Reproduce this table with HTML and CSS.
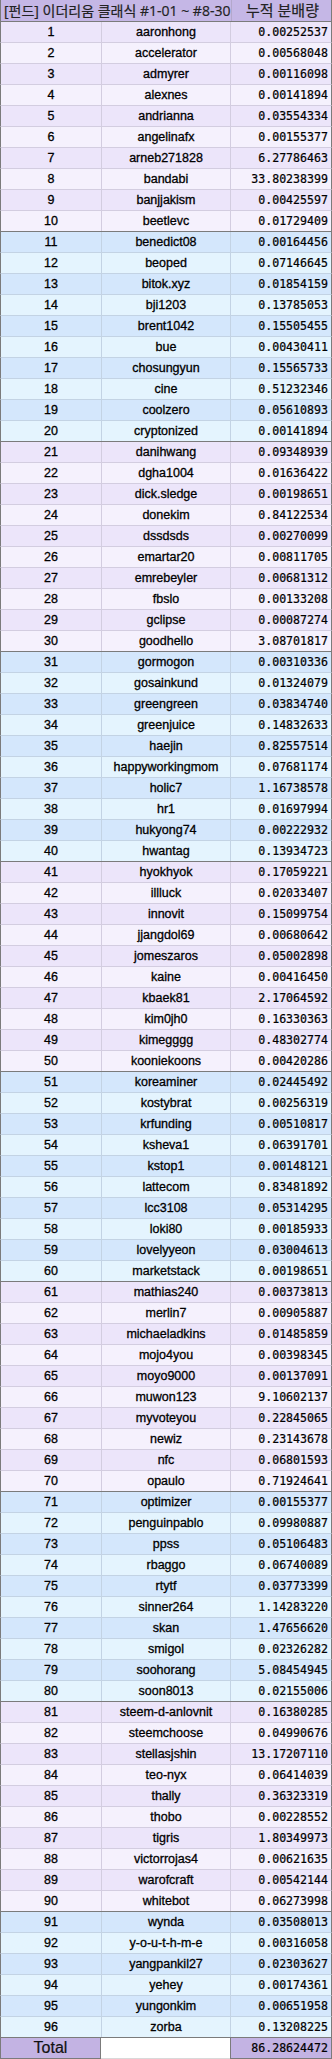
FILE: index.html
```html
<!DOCTYPE html>
<html lang="ko">
<head>
<meta charset="utf-8">
<link rel="stylesheet" href="styles.css">
</head>
<body>
<div class="sheet">
  <div class="hdr">
    <div class="hc title">[펀드] 이더리움 클래식 #1-01 ~ #8-30</div>
    <div class="hc amt">누적 분배량</div>
  </div>
  <div class="r p d"><div class="c n">1</div><div class="c u">aaronhong</div><div class="c v">0.00252537</div></div>
  <div class="r p"><div class="c n">2</div><div class="c u">accelerator</div><div class="c v">0.00568048</div></div>
  <div class="r p d"><div class="c n">3</div><div class="c u">admyrer</div><div class="c v">0.00116098</div></div>
  <div class="r p"><div class="c n">4</div><div class="c u">alexnes</div><div class="c v">0.00141894</div></div>
  <div class="r p d"><div class="c n">5</div><div class="c u">andrianna</div><div class="c v">0.03554334</div></div>
  <div class="r p"><div class="c n">6</div><div class="c u">angelinafx</div><div class="c v">0.00155377</div></div>
  <div class="r p d"><div class="c n">7</div><div class="c u">arneb271828</div><div class="c v">6.27786463</div></div>
  <div class="r p"><div class="c n">8</div><div class="c u">bandabi</div><div class="c v">33.80238399</div></div>
  <div class="r p d"><div class="c n">9</div><div class="c u">banjjakism</div><div class="c v">0.00425597</div></div>
  <div class="r p end"><div class="c n">10</div><div class="c u">beetlevc</div><div class="c v">0.01729409</div></div>
  <div class="r b d"><div class="c n">11</div><div class="c u">benedict08</div><div class="c v">0.00164456</div></div>
  <div class="r b"><div class="c n">12</div><div class="c u">beoped</div><div class="c v">0.07146645</div></div>
  <div class="r b d"><div class="c n">13</div><div class="c u">bitok.xyz</div><div class="c v">0.01854159</div></div>
  <div class="r b"><div class="c n">14</div><div class="c u">bji1203</div><div class="c v">0.13785053</div></div>
  <div class="r b d"><div class="c n">15</div><div class="c u">brent1042</div><div class="c v">0.15505455</div></div>
  <div class="r b"><div class="c n">16</div><div class="c u">bue</div><div class="c v">0.00430411</div></div>
  <div class="r b d"><div class="c n">17</div><div class="c u">chosungyun</div><div class="c v">0.15565733</div></div>
  <div class="r b"><div class="c n">18</div><div class="c u">cine</div><div class="c v">0.51232346</div></div>
  <div class="r b d"><div class="c n">19</div><div class="c u">coolzero</div><div class="c v">0.05610893</div></div>
  <div class="r b end"><div class="c n">20</div><div class="c u">cryptonized</div><div class="c v">0.00141894</div></div>
  <div class="r p d"><div class="c n">21</div><div class="c u">danihwang</div><div class="c v">0.09348939</div></div>
  <div class="r p"><div class="c n">22</div><div class="c u">dgha1004</div><div class="c v">0.01636422</div></div>
  <div class="r p d"><div class="c n">23</div><div class="c u">dick.sledge</div><div class="c v">0.00198651</div></div>
  <div class="r p"><div class="c n">24</div><div class="c u">donekim</div><div class="c v">0.84122534</div></div>
  <div class="r p d"><div class="c n">25</div><div class="c u">dssdsds</div><div class="c v">0.00270099</div></div>
  <div class="r p"><div class="c n">26</div><div class="c u">emartar20</div><div class="c v">0.00811705</div></div>
  <div class="r p d"><div class="c n">27</div><div class="c u">emrebeyler</div><div class="c v">0.00681312</div></div>
  <div class="r p"><div class="c n">28</div><div class="c u">fbslo</div><div class="c v">0.00133208</div></div>
  <div class="r p d"><div class="c n">29</div><div class="c u">gclipse</div><div class="c v">0.00087274</div></div>
  <div class="r p end"><div class="c n">30</div><div class="c u">goodhello</div><div class="c v">3.08701817</div></div>
  <div class="r b d"><div class="c n">31</div><div class="c u">gormogon</div><div class="c v">0.00310336</div></div>
  <div class="r b"><div class="c n">32</div><div class="c u">gosainkund</div><div class="c v">0.01324079</div></div>
  <div class="r b d"><div class="c n">33</div><div class="c u">greengreen</div><div class="c v">0.03834740</div></div>
  <div class="r b"><div class="c n">34</div><div class="c u">greenjuice</div><div class="c v">0.14832633</div></div>
  <div class="r b d"><div class="c n">35</div><div class="c u">haejin</div><div class="c v">0.82557514</div></div>
  <div class="r b"><div class="c n">36</div><div class="c u">happyworkingmom</div><div class="c v">0.07681174</div></div>
  <div class="r b d"><div class="c n">37</div><div class="c u">holic7</div><div class="c v">1.16738578</div></div>
  <div class="r b"><div class="c n">38</div><div class="c u">hr1</div><div class="c v">0.01697994</div></div>
  <div class="r b d"><div class="c n">39</div><div class="c u">hukyong74</div><div class="c v">0.00222932</div></div>
  <div class="r b end"><div class="c n">40</div><div class="c u">hwantag</div><div class="c v">0.13934723</div></div>
  <div class="r p d"><div class="c n">41</div><div class="c u">hyokhyok</div><div class="c v">0.17059221</div></div>
  <div class="r p"><div class="c n">42</div><div class="c u">illluck</div><div class="c v">0.02033407</div></div>
  <div class="r p d"><div class="c n">43</div><div class="c u">innovit</div><div class="c v">0.15099754</div></div>
  <div class="r p"><div class="c n">44</div><div class="c u">jjangdol69</div><div class="c v">0.00680642</div></div>
  <div class="r p d"><div class="c n">45</div><div class="c u">jomeszaros</div><div class="c v">0.05002898</div></div>
  <div class="r p"><div class="c n">46</div><div class="c u">kaine</div><div class="c v">0.00416450</div></div>
  <div class="r p d"><div class="c n">47</div><div class="c u">kbaek81</div><div class="c v">2.17064592</div></div>
  <div class="r p"><div class="c n">48</div><div class="c u">kim0jh0</div><div class="c v">0.16330363</div></div>
  <div class="r p d"><div class="c n">49</div><div class="c u">kimegggg</div><div class="c v">0.48302774</div></div>
  <div class="r p end"><div class="c n">50</div><div class="c u">kooniekoons</div><div class="c v">0.00420286</div></div>
  <div class="r b d"><div class="c n">51</div><div class="c u">koreaminer</div><div class="c v">0.02445492</div></div>
  <div class="r b"><div class="c n">52</div><div class="c u">kostybrat</div><div class="c v">0.00256319</div></div>
  <div class="r b d"><div class="c n">53</div><div class="c u">krfunding</div><div class="c v">0.00510817</div></div>
  <div class="r b"><div class="c n">54</div><div class="c u">ksheva1</div><div class="c v">0.06391701</div></div>
  <div class="r b d"><div class="c n">55</div><div class="c u">kstop1</div><div class="c v">0.00148121</div></div>
  <div class="r b"><div class="c n">56</div><div class="c u">lattecom</div><div class="c v">0.83481892</div></div>
  <div class="r b d"><div class="c n">57</div><div class="c u">lcc3108</div><div class="c v">0.05314295</div></div>
  <div class="r b"><div class="c n">58</div><div class="c u">loki80</div><div class="c v">0.00185933</div></div>
  <div class="r b d"><div class="c n">59</div><div class="c u">lovelyyeon</div><div class="c v">0.03004613</div></div>
  <div class="r b end"><div class="c n">60</div><div class="c u">marketstack</div><div class="c v">0.00198651</div></div>
  <div class="r p d"><div class="c n">61</div><div class="c u">mathias240</div><div class="c v">0.00373813</div></div>
  <div class="r p"><div class="c n">62</div><div class="c u">merlin7</div><div class="c v">0.00905887</div></div>
  <div class="r p d"><div class="c n">63</div><div class="c u">michaeladkins</div><div class="c v">0.01485859</div></div>
  <div class="r p"><div class="c n">64</div><div class="c u">mojo4you</div><div class="c v">0.00398345</div></div>
  <div class="r p d"><div class="c n">65</div><div class="c u">moyo9000</div><div class="c v">0.00137091</div></div>
  <div class="r p"><div class="c n">66</div><div class="c u">muwon123</div><div class="c v">9.10602137</div></div>
  <div class="r p d"><div class="c n">67</div><div class="c u">myvoteyou</div><div class="c v">0.22845065</div></div>
  <div class="r p"><div class="c n">68</div><div class="c u">newiz</div><div class="c v">0.23143678</div></div>
  <div class="r p d"><div class="c n">69</div><div class="c u">nfc</div><div class="c v">0.06801593</div></div>
  <div class="r p end"><div class="c n">70</div><div class="c u">opaulo</div><div class="c v">0.71924641</div></div>
  <div class="r b d"><div class="c n">71</div><div class="c u">optimizer</div><div class="c v">0.00155377</div></div>
  <div class="r b"><div class="c n">72</div><div class="c u">penguinpablo</div><div class="c v">0.09980887</div></div>
  <div class="r b d"><div class="c n">73</div><div class="c u">ppss</div><div class="c v">0.05106483</div></div>
  <div class="r b"><div class="c n">74</div><div class="c u">rbaggo</div><div class="c v">0.06740089</div></div>
  <div class="r b d"><div class="c n">75</div><div class="c u">rtytf</div><div class="c v">0.03773399</div></div>
  <div class="r b"><div class="c n">76</div><div class="c u">sinner264</div><div class="c v">1.14283220</div></div>
  <div class="r b d"><div class="c n">77</div><div class="c u">skan</div><div class="c v">1.47656620</div></div>
  <div class="r b"><div class="c n">78</div><div class="c u">smigol</div><div class="c v">0.02326282</div></div>
  <div class="r b d"><div class="c n">79</div><div class="c u">soohorang</div><div class="c v">5.08454945</div></div>
  <div class="r b end"><div class="c n">80</div><div class="c u">soon8013</div><div class="c v">0.02155006</div></div>
  <div class="r p d"><div class="c n">81</div><div class="c u">steem-d-anlovnit</div><div class="c v">0.16380285</div></div>
  <div class="r p"><div class="c n">82</div><div class="c u">steemchoose</div><div class="c v">0.04990676</div></div>
  <div class="r p d"><div class="c n">83</div><div class="c u">stellasjshin</div><div class="c v">13.17207110</div></div>
  <div class="r p"><div class="c n">84</div><div class="c u">teo-nyx</div><div class="c v">0.06414039</div></div>
  <div class="r p d"><div class="c n">85</div><div class="c u">thally</div><div class="c v">0.36323319</div></div>
  <div class="r p"><div class="c n">86</div><div class="c u">thobo</div><div class="c v">0.00228552</div></div>
  <div class="r p d"><div class="c n">87</div><div class="c u">tigris</div><div class="c v">1.80349973</div></div>
  <div class="r p"><div class="c n">88</div><div class="c u">victorrojas4</div><div class="c v">0.00621635</div></div>
  <div class="r p d"><div class="c n">89</div><div class="c u">warofcraft</div><div class="c v">0.00542144</div></div>
  <div class="r p end"><div class="c n">90</div><div class="c u">whitebot</div><div class="c v">0.06273998</div></div>
  <div class="r b d"><div class="c n">91</div><div class="c u">wynda</div><div class="c v">0.03508013</div></div>
  <div class="r b"><div class="c n">92</div><div class="c u">y-o-u-t-h-m-e</div><div class="c v">0.00316058</div></div>
  <div class="r b d"><div class="c n">93</div><div class="c u">yangpankil27</div><div class="c v">0.02303627</div></div>
  <div class="r b"><div class="c n">94</div><div class="c u">yehey</div><div class="c v">0.00174361</div></div>
  <div class="r b d"><div class="c n">95</div><div class="c u">yungonkim</div><div class="c v">0.00651958</div></div>
  <div class="r b end"><div class="c n">96</div><div class="c u">zorba</div><div class="c v">0.13208225</div></div>
  <div class="tot">
    <div class="tc tl">Total</div>
    <div class="tc tm"></div>
    <div class="tc tv">86.28624472</div>
  </div>
</div>
</body>
</html>
```

FILE: styles.css
```css
* { box-sizing: border-box; }
html, body { margin: 0; padding: 0; background: #fff; }
body { font-family: "Liberation Sans", Arial, sans-serif; color: #000; }

.sheet { width: 332px; }

.hdr {
  display: grid;
  grid-template-columns: 231px 101px;
  height: 22px;
  background: #c5b7e6;
  border-left: 1px solid #7b7b7b;
  border-right: 1px solid #7b7b7b;
  border-bottom: 1px solid #7b7b7b;
}
.hc {
  height: 21px;
  line-height: 21px;
  font-family: "Open Sans", "Noto Sans CJK KR", sans-serif;
  color: #222;
  white-space: nowrap;
  overflow: hidden;
  -webkit-text-stroke: 0.2px #222;
}
.title {
  font-size: 14px;
  padding-left: 3px;
  border-right: 1px solid #b3a8cc;
}
.amt {
  font-size: 15px;
  text-align: center;
}

.r {
  display: grid;
  grid-template-columns: 101px 129px 100px;
  height: 21px;
  border-left: 1px solid #7b7b7b;
  border-right: 1px solid #7b7b7b;
  border-bottom: 1px solid #d3cde0;
}
.r.p { background: #f5f1fd; }
.r.p.d { background: #ece5fa; }
.r.b { background: #e4f4fe; border-bottom-color: #c3d3e4; }
.r.b.d { background: #d4e7fc; }
.r.end { border-bottom-color: #7b7b7b; }

.c {
  height: 20px;
  line-height: 20px;
  font-size: 12.5px;
  white-space: nowrap;
  overflow: hidden;
  -webkit-text-stroke: 0.3px #000;
}
.r.p .n, .r.p .u { border-right: 1px solid #d3cde0; }
.r.b .n, .r.b .u { border-right: 1px solid #c3d3e4; }
.n, .u { text-align: center; }
.v {
  text-align: right;
  padding-right: 3px;
  font-family: "DejaVu Sans Mono", "Liberation Mono", monospace;
  font-size: 11.6px;
  -webkit-text-stroke: 0.2px #000;
}

.tot {
  display: grid;
  grid-template-columns: 101px 129px 102px;
  height: 21px;
}
.tc { height: 21px; line-height: 20px; white-space: nowrap; }
.tl {
  background: #c3b3e3;
  border-left: 1px solid #7b7b7b;
  border-right: 1px solid #7b7b7b;
  border-bottom: 1px solid #7b7b7b;
  text-align: center;
  font-size: 16px;
  color: #111;
  -webkit-text-stroke: 0.2px #111;
}
.tm {
  background: #fff;
  border-bottom: 1px solid #d9d9d9;
}
.tv {
  background: #c3b3e3;
  border-left: 1px solid #7b7b7b;
  border-right: 1px solid #7b7b7b;
  border-bottom: 1px solid #7b7b7b;
  text-align: right;
  padding-right: 3px;
  font-family: "DejaVu Sans Mono", "Liberation Mono", monospace;
  font-size: 11.6px;
  -webkit-text-stroke: 0.2px #000;
}
```
